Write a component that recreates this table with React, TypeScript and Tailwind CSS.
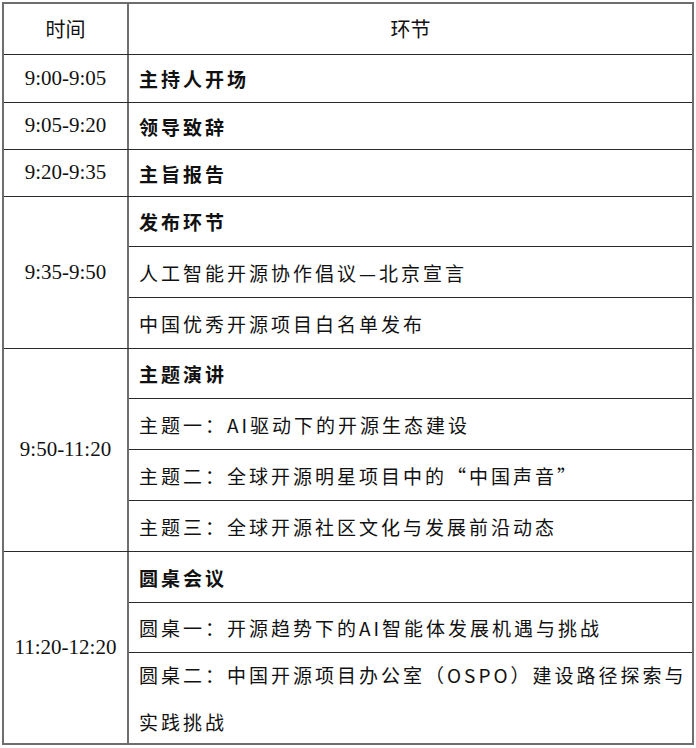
const cjk = "font-['Noto_Sans_CJK_SC',sans-serif]";

type Item = { text: React.ReactNode; bold?: boolean; h: string };
type Group = { time: string; items: Item[] };

// row heights measured off the original table
const groups: Group[] = [
  { time: "9:00-9:05", items: [{ text: "主持人开场", bold: true, h: "h-[47px]" }] },
  { time: "9:05-9:20", items: [{ text: "领导致辞", bold: true, h: "h-[46px]" }] },
  { time: "9:20-9:35", items: [{ text: "主旨报告", bold: true, h: "h-[46px]" }] },
  {
    time: "9:35-9:50",
    items: [
      { text: "发布环节", bold: true, h: "h-[50px]" },
      { text: "人工智能开源协作倡议—北京宣言", h: "h-[51px]" },
      { text: "中国优秀开源项目白名单发布", h: "h-[50px]" },
    ],
  },
  {
    time: "9:50-11:20",
    items: [
      { text: "主题演讲", bold: true, h: "h-[50px]" },
      { text: "主题一：AI驱动下的开源生态建设", h: "h-[51px]" },
      { text: "主题二：全球开源明星项目中的“中国声音”", h: "h-[51px]" },
      { text: "主题三：全球开源社区文化与发展前沿动态", h: "h-[50px]" },
    ],
  },
  {
    time: "11:20-12:20",
    items: [
      { text: "圆桌会议", bold: true, h: "h-[51px]" },
      { text: "圆桌一：开源趋势下的AI智能体发展机遇与挑战", h: "h-[50px]" },
      {
        text: (
          <>
            圆桌二：中国开源项目办公室（OSPO）建设路径探索与
            <br />
            实践挑战
          </>
        ),
        h: "h-[90px]",
      },
    ],
  },
];

export default function App() {
  return (
    <div className="min-h-[748px] w-[696px] bg-white pl-[2px] pt-[2px] text-[#111]">
      <div className="w-[692px] border-2 border-[#6e6e6e]">
        <div className="flex h-[51px] border-b border-[#2a2a2a]">
          <div className={`flex w-[125px] items-center justify-center border-r-2 border-[#6e6e6e] text-[20px] ${cjk}`}>
            时间
          </div>
          <div className={`flex flex-1 items-center justify-center text-[20px] ${cjk}`}>环节</div>
        </div>
        {groups.map((g, gi) => (
          <div
            key={g.time}
            className={`flex ${gi < groups.length - 1 ? "border-b border-[#2a2a2a]" : ""}`}
          >
            <div className="flex w-[125px] items-center justify-center border-r-2 border-[#6e6e6e] font-['Liberation_Serif',serif] text-[21px]">
              {g.time}
            </div>
            <div className="flex flex-1 flex-col">
              {g.items.map((it, i) => (
                <div
                  key={i}
                  className={`flex ${it.h} shrink-0 items-center pl-[10px] text-[19px] leading-[47px] tracking-[3px] ${cjk} ${
                    it.bold ? "font-bold" : "font-normal"
                  } ${i < g.items.length - 1 ? "border-b border-[#2a2a2a]" : ""}`}
                >
                  <div>{it.text}</div>
                </div>
              ))}
            </div>
          </div>
        ))}
      </div>
    </div>
  );
}
